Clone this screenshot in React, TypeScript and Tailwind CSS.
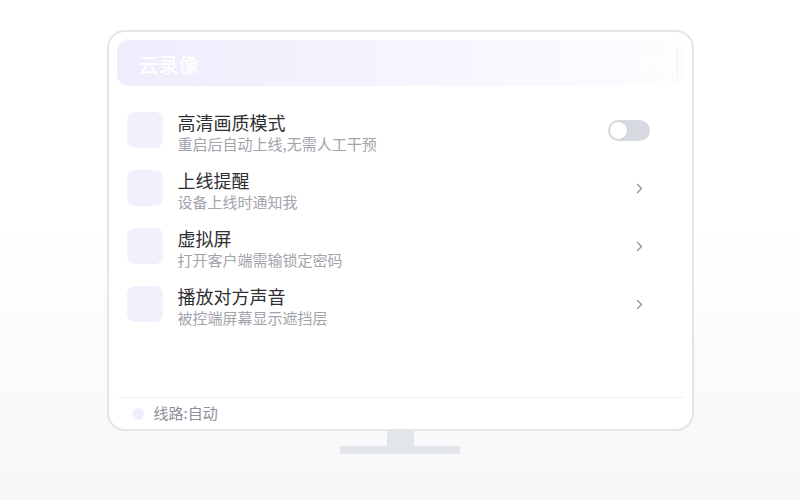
import React from 'react';

const rows = [
  { title: '高清画质模式', desc: '重启后自动上线,无需人工干预', toggle: true },
  { title: '上线提醒', desc: '设备上线时通知我' },
  { title: '虚拟屏', desc: '打开客户端需输锁定密码' },
  { title: '播放对方声音', desc: '被控端屏幕显示遮挡层' },
];

function Chevron() {
  return (
    <svg width="7" height="11" viewBox="0 0 7 11" fill="none">
      <path d="M1.5 1.5L5.5 5.5L1.5 9.5" stroke="#8f95a0" strokeWidth="1.4" strokeLinecap="round" strokeLinejoin="round" />
    </svg>
  );
}

function Toggle() {
  return (
    <div className="w-[42px] h-[21px] rounded-full bg-[#d6d9df] flex items-center p-[1px]">
      <div className="w-[19px] h-[19px] rounded-full bg-white border border-[#d3d6dc]" />
    </div>
  );
}

export default function App() {
  return (
    <div
      className="w-[800px] h-[500px] flex flex-col items-center pt-[30px] bg-gradient-to-b from-white via-white via-45% to-[#f7f7f9]"
      style={{ fontFamily: '"Noto Sans CJK SC", "Noto Sans", sans-serif' }}
    >
      {/* Monitor */}
      <div className="w-[587px] h-[401px] border-2 border-[#e3e5e9] rounded-[18px] bg-white flex flex-col px-[8px] pt-[8px]">
        {/* Header */}
        <div className="h-[46px] rounded-[12px] bg-gradient-to-r from-[#f0ecfd] via-[#f6f4fe] to-[#fdfdff] flex items-center pl-[22px] pr-[6px]">
          <span className="text-[20px] font-medium text-white leading-none pt-[3px]">云录像</span>
          <div className="ml-auto flex items-center gap-[6px]">
            <div className="w-[10px] h-[10px] rounded-full bg-white/70" />
            <div className="w-[10px] h-[10px] rounded-full bg-white/70" />
            <div className="w-[1px] h-[28px] bg-[#f0eff6] ml-[8px]" />
          </div>
        </div>

        {/* Rows */}
        <div className="flex-1 flex flex-col pt-[26px] pl-[10px] pr-[34px]">
          {rows.map((row) => (
            <div key={row.title} className="h-[58px] flex items-start">
              <div className="w-[36px] h-[36px] rounded-[8px] bg-[#f3f0fd]" />
              <div className="ml-[15px] flex flex-col">
                <span className="text-[18px] leading-[21px] text-[#2f2f33]">{row.title}</span>
                <span className="text-[15px] leading-[21px] text-[#a2a4ab]">{row.desc}</span>
              </div>
              <div className="ml-auto h-[36px] flex items-center">
                {row.toggle ? (
                  <Toggle />
                ) : (
                  <div className="w-[42px] flex justify-end pr-[7px]">
                    <Chevron />
                  </div>
                )}
              </div>
            </div>
          ))}
        </div>

        {/* Footer */}
        <div className="mx-[1px] border-t border-[#eeeff2] h-[32px] flex items-center pl-[14px]">
          <div className="w-[12px] h-[12px] rounded-full bg-[#f1eefd]" />
          <span className="ml-[10px] text-[15px] text-[#8c9099]">线路:自动</span>
        </div>
      </div>

      {/* Stand */}
      <div className="w-[27px] h-[15px] bg-[#e2e5ea]" />
      <div className="w-[120px] h-[8px] bg-[#e2e5ea]" />
    </div>
  );
}
